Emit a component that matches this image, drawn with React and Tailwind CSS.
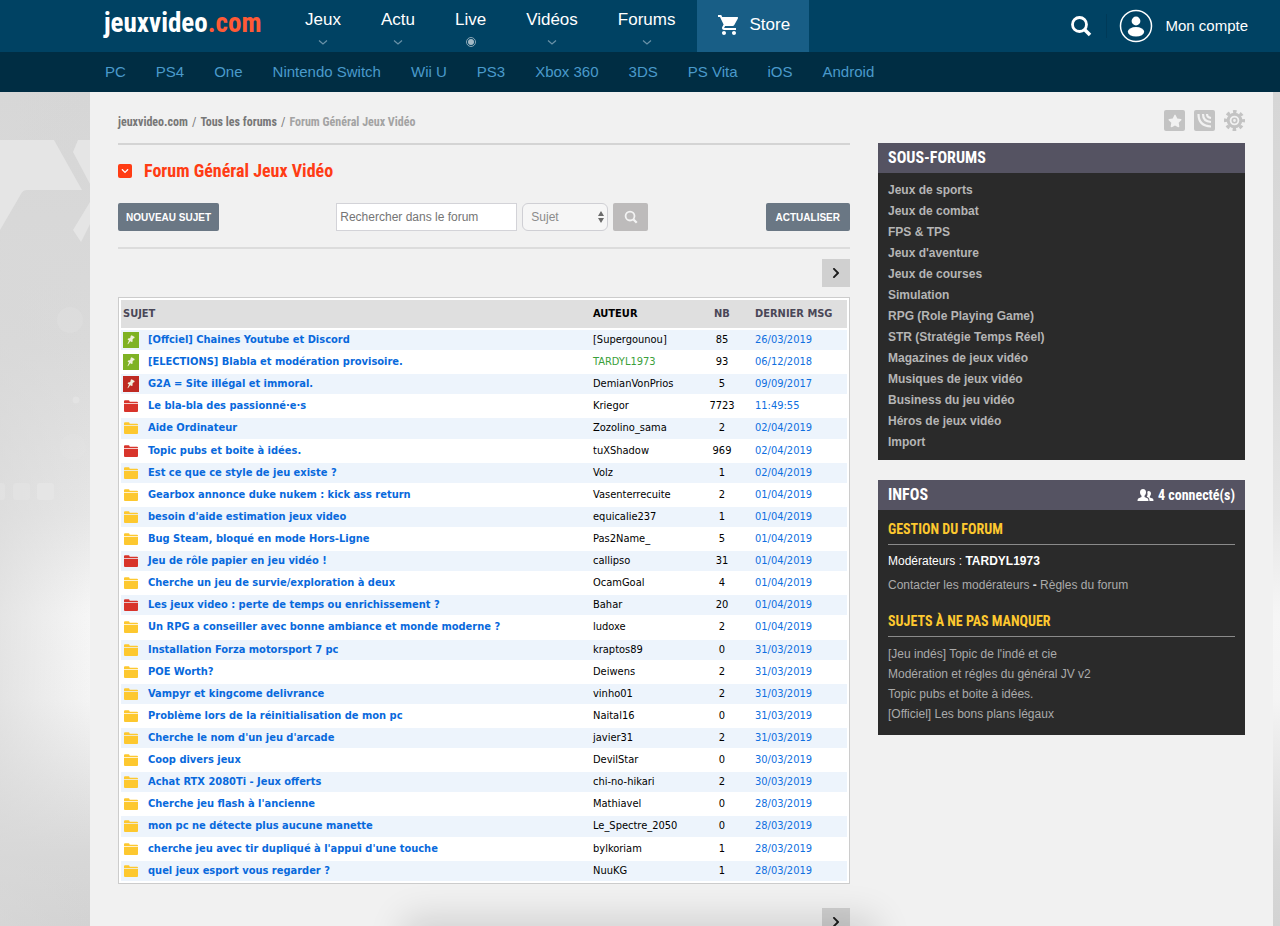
import React from 'react';
import { FaStar, FaChevronDown, FaChevronRight } from 'react-icons/fa';
import { MdShoppingCart } from 'react-icons/md';

const navItems = ['Jeux', 'Actu', 'Live', 'Vidéos', 'Forums'];

const platforms = [
  'PC', 'PS4', 'One', 'Nintendo Switch', 'Wii U', 'PS3',
  'Xbox 360', '3DS', 'PS Vita', 'iOS', 'Android'
];

const topics = [
  { icon: 'pin-green', title: '[Offciel] Chaines Youtube et Discord', author: '[Supergounou]', count: 85, date: '26/03/2019' },
  { icon: 'pin-green', title: '[ELECTIONS] Blabla et modération provisoire.', author: 'TARDYL1973', modo: true, count: 93, date: '06/12/2018' },
  { icon: 'pin-red', title: 'G2A = Site illégal et immoral.', author: 'DemianVonPrios', count: 5, date: '09/09/2017' },
  { icon: 'red', title: 'Le bla-bla des passionné·e·s', author: 'Kriegor', count: 7723, date: '11:49:55' },
  { icon: 'yellow', title: 'Aide Ordinateur', author: 'Zozolino_sama', count: 2, date: '02/04/2019' },
  { icon: 'red', title: 'Topic pubs et boite à idées.', author: 'tuXShadow', count: 969, date: '02/04/2019' },
  { icon: 'yellow', title: 'Est ce que ce style de jeu existe ?', author: 'Volz', count: 1, date: '02/04/2019' },
  { icon: 'yellow', title: 'Gearbox annonce duke nukem : kick ass return', author: 'Vasenterrecuite', count: 2, date: '01/04/2019' },
  { icon: 'yellow', title: "besoin d'aide estimation jeux video", author: 'equicalie237', count: 1, date: '01/04/2019' },
  { icon: 'yellow', title: 'Bug Steam, bloqué en mode Hors-Ligne', author: 'Pas2Name_', count: 5, date: '01/04/2019' },
  { icon: 'red', title: 'Jeu de rôle papier en jeu vidéo !', author: 'callipso', count: 31, date: '01/04/2019' },
  { icon: 'yellow', title: 'Cherche un jeu de survie/exploration à deux', author: 'OcamGoal', count: 4, date: '01/04/2019' },
  { icon: 'red', title: 'Les jeux video : perte de temps ou enrichissement ?', author: 'Bahar', count: 20, date: '01/04/2019' },
  { icon: 'yellow', title: 'Un RPG a conseiller avec bonne ambiance et monde moderne ?', author: 'ludoxe', count: 2, date: '01/04/2019' },
  { icon: 'yellow', title: 'Installation Forza motorsport 7 pc', author: 'kraptos89', count: 0, date: '31/03/2019' },
  { icon: 'yellow', title: 'POE Worth?', author: 'Deiwens', count: 2, date: '31/03/2019' },
  { icon: 'yellow', title: 'Vampyr et kingcome delivrance', author: 'vinho01', count: 2, date: '31/03/2019' },
  { icon: 'yellow', title: 'Problème lors de la réinitialisation de mon pc', author: 'Naital16', count: 0, date: '31/03/2019' },
  { icon: 'yellow', title: "Cherche le nom d'un jeu d'arcade", author: 'javier31', count: 2, date: '31/03/2019' },
  { icon: 'yellow', title: 'Coop divers jeux', author: 'DevilStar', count: 0, date: '30/03/2019' },
  { icon: 'yellow', title: 'Achat RTX 2080Ti - Jeux offerts', author: 'chi-no-hikari', count: 2, date: '30/03/2019' },
  { icon: 'yellow', title: "Cherche jeu flash à l'ancienne", author: 'Mathiavel', count: 0, date: '28/03/2019' },
  { icon: 'yellow', title: 'mon pc ne détecte plus aucune manette', author: 'Le_Spectre_2050', count: 0, date: '28/03/2019' },
  { icon: 'yellow', title: "cherche jeu avec tir dupliqué à l'appui d'une touche", author: 'bylkoriam', count: 1, date: '28/03/2019' },
  { icon: 'yellow', title: 'quel jeux esport vous regarder ?', author: 'NuuKG', count: 1, date: '28/03/2019' }
];

const subForums = [
  'Jeux de sports', 'Jeux de combat', 'FPS & TPS', "Jeux d'aventure", 'Jeux de courses',
  'Simulation', 'RPG (Role Playing Game)', 'STR (Stratégie Temps Réel)', 'Magazines de jeux vidéo',
  'Musiques de jeux vidéo', 'Business du jeu vidéo', 'Héros de jeux vidéo', 'Import'
];

const pinnedTopics = [
  "[Jeu indés] Topic de l'indé et cie",
  'Modération et régles du général JV v2',
  'Topic pubs et boite à idées.',
  '[Officiel] Les bons plans légaux'
];

const condensed = "font-['Roboto_Condensed','Liberation_Sans_Narrow',Roboto,sans-serif]";

const TopicIcon = ({ type }) => {
  if (type === 'pin-green' || type === 'pin-red') {
    return (
      <svg viewBox="0 0 16 16" className="block size-4">
        <rect width="16" height="16" fill={type === 'pin-green' ? '#7fb224' : '#bf2a22'} />
        <path
          d="M7.600 4l1-.7 3 1.700-.3 1.200-1.200.4-.7 1.400.4 1.300-1 .7-1.600-.8-2.200 3-.5-.3 1.500-3.500-1.400-.9.5-1 1.600-.2.900-1.100z"
          fill="#f0f0dc"
        />
      </svg>
    );
  }
  return (
    <svg viewBox="0 0 16 16" className="block size-4" fill={type === 'red' ? '#d8342b' : '#fdc82f'}>
      <path d="M1 3.200q0-1 1-1h3.600q.7 0 .9.800l.2.700H14q1 0 1 1v.600H1z" />
      <path d="M1 6h14v7q0 1-1 1H2q-1 0-1-1z" />
    </svg>
  );
};

const SearchIcon = ({ className }) => (
  <svg viewBox="0 0 22 22" className={className} fill="none" stroke="currentColor" strokeWidth="2.800">
    <circle cx="9.500" cy="9.500" r="7" />
    <path d="M14.500 14.500l5.500 5.500" strokeWidth="3.600" />
  </svg>
);

const Header = () => (
  <header className="relative">
    <div className="flex h-[52px] bg-[#004263] pl-[104px] pr-8 text-white">
      <a href="#" className={`${condensed} w-[201px] text-[27px]/[46px] font-bold`}>
        jeuxvideo<span className="text-[#ff5a36]">.com</span>
      </a>
      <nav className="flex gap-10">
        {navItems.map((item) => (
          <a key={item} href="#" className="flex flex-col items-center pt-2 text-[17px]/[24px]">
            {item}
            {item === 'Live' ? (
              <svg viewBox="0 0 12 12" className="mt-1 size-3">
                <circle cx="6" cy="6" r="4.500" fill="none" stroke="#8aa6b6" />
                <circle cx="6" cy="6" r="3" fill="#a4bac6" />
              </svg>
            ) : (
              <svg viewBox="0 0 12 12" className="mt-1 size-3" fill="none" stroke="#6a92a8" strokeWidth="1.200">
                <path d="M2 4.500L6 8l4-3.500" />
              </svg>
            )}
          </a>
        ))}
      </nav>
      <a href="#" className="ml-[22px] flex w-28 items-center gap-2 bg-[#185e86] pl-5 pb-[2px] text-[17px]">
        <MdShoppingCart className="size-6" />
        Store
      </a>
      <div className="ml-auto flex items-center">
        <button aria-label="Rechercher" className="mr-[14px]">
          <SearchIcon className="size-[22px]" />
        </button>
        <span className="mr-3 h-6 w-px bg-[#003a58]" />
        <a href="#" className="flex items-center gap-3 text-[15px]">
          <svg viewBox="0 0 34 34" className="size-[34px]" fill="currentColor">
            <circle cx="17" cy="17" r="15.500" fill="none" stroke="currentColor" strokeWidth="1.500" />
            <circle cx="17" cy="12" r="4.400" />
            <ellipse cx="17" cy="22.800" rx="8.200" ry="4.800" />
          </svg>
          Mon compte
        </a>
      </div>
    </div>
    <nav className="flex h-10 items-center gap-[30px] bg-[#002d43] pl-[105px] text-[15px] text-[#4a9acb]">
      {platforms.map((name) => (
        <a key={name} href="#">{name}</a>
      ))}
    </nav>
  </header>
);

// Grey artwork on both sides of the page column
const Backdrop = () => (
  <div className="absolute inset-0 bg-[linear-gradient(#d6d6d6,#dadada_30%,#e6e6e6_50%,#f6f6f6_62%,#f4f4f4_72%,#d8d8d8_90%,#d2d2d2)]">
    <div className="h-full w-[90px] bg-linear-to-r from-[#d8d8d8]/60 to-transparent" />
    <svg viewBox="0 0 90 450" className="absolute left-0 top-0 w-[90px]" fill="#e5e5e5">
      <path d="M0 48h54l28 50H27q-4 0-6 4L0 138z" />
      <path d="M78 48h12v44L73 60zM90 110v22l-9 18-8-12z" />
      <circle cx="70" cy="228" r="13" opacity=".3" />
      <circle cx="76" cy="308" r="3.500" opacity=".7" />
      <circle cx="73" cy="355" r="13" opacity=".3" />
      <rect x="-4" y="391" width="9" height="17" rx="3" opacity=".5" />
      <rect x="13" y="391" width="17" height="17" rx="3" opacity=".5" />
      <rect x="37" y="391" width="17" height="17" rx="3" />
    </svg>
  </div>
);

const Pager = () => (
  <div className="flex justify-end">
    <a href="#" aria-label="Page suivante" className="flex size-7 items-center justify-center bg-[#d0d0d0] text-[#1c1c1c]">
      <FaChevronRight className="size-3" />
    </a>
  </div>
);

const Toolbar = () => (
  <div className="flex h-7 items-stretch justify-between">
    <button className="rounded-xs bg-[#6a7784] px-2 text-[10px] font-bold text-white">NOUVEAU SUJET</button>
    <form className="flex gap-[5px] text-[12px] text-[#757575]">
      <input
        type="text"
        aria-label="Rechercher dans le forum"
        placeholder="Rechercher dans le forum"
        className="w-[181px] border border-[#d3d3d8] bg-white px-[3px] placeholder:text-[#757575]"
      />
      <div className="relative flex">
        <select aria-label="Type de recherche" className="w-[86px] appearance-none rounded-md border border-[#cfcfd4] bg-[#f6f6f6] px-2 text-[#8b8b8b]">
          <option>Sujet</option>
          <option>Auteur</option>
        </select>
        <svg viewBox="0 0 6 12" className="pointer-events-none absolute right-1 top-2 h-3 w-[6px]" fill="#6b6b6b">
          <path d="M3 0l3 5H0zM3 12l3-5H0z" />
        </svg>
      </div>
      <button type="button" aria-label="Lancer la recherche" className="flex w-[35px] items-center justify-center rounded-xs bg-[#bdbbbb] text-[#f3f3f3]">
        <SearchIcon className="size-[14px]" />
      </button>
    </form>
    <button className="rounded-xs bg-[#6a7784] px-[10px] text-[10px] font-bold text-white">ACTUALISER</button>
  </div>
);

const TopicTable = () => (
  <div className="border border-[#ccc] bg-white px-[2px]">
    <table className="h-[585px] w-full table-fixed border-separate border-spacing-x-0 border-spacing-y-[2px] font-['DejaVu_Sans_Condensed','DejaVu_Sans',sans-serif] text-[11px]/[16px]">
      <colgroup>
        <col />
        <col className="w-[108px]" />
        <col className="w-[50px]" />
        <col className="w-[100px]" />
      </colgroup>
      <thead>
        <tr className="h-7 bg-[#dfdfdf] text-left text-[#4a4757]">
          <th className="px-[2px]">SUJET</th>
          <th className="px-1 text-black">AUTEUR</th>
          <th className="text-center">NB</th>
          <th className="px-2 whitespace-nowrap">DERNIER MSG</th>
        </tr>
      </thead>
      <tbody>
        {topics.map((topic) => (
          <tr key={topic.title} className="text-black odd:bg-[#edf4fc]">
            <td className="px-[2px] py-[2px]">
              <a href="#" className="flex items-center gap-[9px] font-bold whitespace-nowrap text-[#0869dc]">
                <TopicIcon type={topic.icon} />
                {topic.title}
              </a>
            </td>
            <td className={topic.modo ? 'px-1 text-[#3aa03a]' : 'px-1'}>{topic.author}</td>
            <td className="text-center">{topic.count}</td>
            <td className="px-2 text-[#0f6fe0]">
              <a href="#">{topic.date}</a>
            </td>
          </tr>
        ))}
      </tbody>
    </table>
  </div>
);

const Sidebar = () => (
  <aside className="w-[367px] shrink-0 text-[12px]">
    <div className="flex h-[51px] items-center justify-end gap-[9px] pt-[6px] text-[#c3c3c3]">
      <button aria-label="Ajouter aux favoris" className="flex size-[21px] items-center justify-center rounded-xs bg-[#c3c3c3] text-[#f1f1f1]">
        <FaStar className="size-[14px]" />
      </button>
      <button aria-label="S'abonner" className="rounded-xs bg-[#c3c3c3]">
        <svg viewBox="0 0 21 21" className="size-[21px]" fill="none" stroke="#f1f1f1" strokeWidth="2.200">
          <path d="M4.500 4q0 12 12.500 12.500M9 4q0 7.500 8 8" />
          <path d="M13 4q0 3.500 4 4" />
        </svg>
      </button>
      <button aria-label="Paramètres">
        <svg viewBox="0 0 21 21" className="size-[21px]" fill="none" stroke="currentColor">
          <circle cx="10.500" cy="10.500" r="6.300" strokeWidth="3" />
          <circle cx="10.500" cy="10.500" r="2.200" strokeWidth="1.600" />
          <circle cx="10.500" cy="10.500" r="9" strokeWidth="3" strokeDasharray="3.600 3.470" strokeDashoffset="1.800" />
        </svg>
      </button>
    </div>

    <section className="bg-[#2a2a2a] pb-[7px]">
      <h2 className={`${condensed} bg-[#555362] px-[10px] text-[16px]/[30px] font-bold text-white`}>SOUS-FORUMS</h2>
      <ul className="px-[10px] pt-[7px] leading-[21px] font-bold text-[#b5b5b5]">
        {subForums.map((name) => (
          <li key={name}><a href="#">{name}</a></li>
        ))}
      </ul>
    </section>

    <section className="mt-5 bg-[#2a2a2a] pb-[11px] text-[#aaa]">
      <div className={`${condensed} flex justify-between bg-[#555362] px-[10px] leading-[30px] font-bold text-white`}>
        <h2 className="text-[16px]">INFOS</h2>
        <span className="flex items-center gap-1 text-[14px]">
          <svg viewBox="0 0 17 14" className="h-[14px] w-[17px]" fill="currentColor">
            <path d="M6 1c2 0 3 1.300 3 3.200 0 1.500-.6 2.700-1.500 3.500v1.200l3.300 1.600q.7.500.7 2.500H.5q0-2 .7-2.500l3.300-1.600V7.700C3.600 6.900 3 5.700 3 4.200 3 2.300 4 1 6 1z" />
            <path d="M11.500 3c1.600 0 2.500 1.100 2.500 2.600 0 1.200-.5 2.200-1.200 2.800v1l2.900 1.200q.8.500.8 2.400h-4q0-2.600-1.300-3.400l-1.500-.8c.8-1.100 1.100-2.600.6-4.800q.3-1 1.200-1z" />
          </svg>
          4 connecté(s)
        </span>
      </div>
      <div className="px-[10px]">
        <h3 className={`${condensed} border-b border-[#8a8a8a] pt-[9px] pb-[5px] text-[14px]/[20px] font-bold text-[#fdc82f]`}>
          GESTION DU FORUM
        </h3>
        <p className="pt-[6px] leading-5 text-white">Modérateurs : <a href="#" className="font-bold">TARDYL1973</a></p>
        <p className="pt-1 leading-5">
          <a href="#">Contacter les modérateurs</a> <b className="text-[#ddd]">-</b> <a href="#">Règles du forum</a>
        </p>
        <h3 className={`${condensed} border-b border-[#8a8a8a] pt-4 pb-[5px] text-[14px]/[20px] font-bold text-[#fdc82f]`}>
          SUJETS À NE PAS MANQUER
        </h3>
        <ul className="pt-[7px] leading-5">
          {pinnedTopics.map((name) => (
            <li key={name}><a href="#">{name}</a></li>
          ))}
        </ul>
      </div>
    </section>
  </aside>
);

const App = () => {
  return (
    <div className="relative flex min-h-screen flex-col font-['Liberation_Sans',Arial,sans-serif]">
      <Header />
      <div className="relative grow">
        <Backdrop />
        <div className="relative ml-[90px] mr-[7px] flex min-h-[834px] gap-7 bg-[#f1f1f1] px-7">
          <main className="min-w-0 grow">
            <div className={`${condensed} flex h-[51px] items-center gap-1 pt-2 text-[12px] font-bold text-[#777]`}>
              <a href="#">jeuxvideo.com</a>
              <span className="font-normal">/</span>
              <a href="#">Tous les forums</a>
              <span className="font-normal">/</span>
              <span className="text-[#a3a3a3]">Forum Général Jeux Vidéo</span>
            </div>
            <div className="flex items-center gap-3 border-t-2 border-[#d4d4d4] pt-[15px]">
              <span className="flex size-[14px] items-center justify-center rounded-xs bg-[#ff3c14] text-white">
                <FaChevronDown className="size-2" />
              </span>
              <h1 className={`${condensed} text-[18px]/[22px] font-bold text-[#ff3c14]`}>Forum Général Jeux Vidéo</h1>
            </div>
            <div className="mt-[21px] mb-[10px] border-b-2 border-[#dcdcdc] pb-4">
              <Toolbar />
            </div>
            <Pager />
            <div className="mt-[10px] mb-6">
              <TopicTable />
            </div>
            <Pager />
          </main>
          <Sidebar />
        </div>
      </div>
      <div className="pointer-events-none fixed inset-x-0 bottom-0 h-12 overflow-hidden">
        <div className="mx-auto mt-14 h-10 w-[440px] shadow-[0_0_36px_16px_rgba(0,0,0,0.14)]" />
      </div>
    </div>
  );
};

export default App;
